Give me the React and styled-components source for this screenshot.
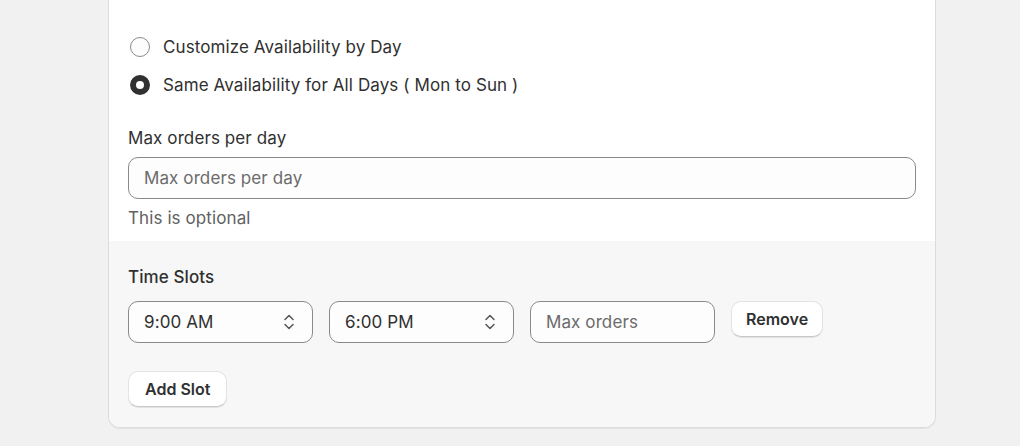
import React from 'react';
import styled, { createGlobalStyle } from 'styled-components';

const GlobalStyle = createGlobalStyle`
  html, body {
    margin: 0;
    padding: 0;
    background: #f1f1f1;
    font-family: Inter, "Noto Sans", sans-serif;
    color: #303030;
    overflow: hidden;
  }
`;

const Page = styled.div`
  width: 1020px;
  height: 446px;
  overflow: hidden;
`;

const Card = styled.div`
  width: 828px;
  box-sizing: border-box;
  margin: -14px 0 0 108px;
  background: #ffffff;
  border: 1px solid #dcdcdc;
  border-radius: 12px;
  overflow: hidden;
  box-shadow: 0 1px 0 rgba(0, 0, 0, 0.06);
`;

const Section = styled.div`
  display: flex;
  flex-direction: column;
  padding: ${(p) => p.$pad};
  background: ${(p) => (p.$muted ? '#f7f7f7' : '#ffffff')};
`;

const RadioGroup = styled.div`
  display: flex;
  flex-direction: column;
  gap: 16px;
  margin-bottom: 31px;
`;

const RadioRow = styled.label`
  display: flex;
  align-items: center;
  gap: 13px;
  font-size: 17px;
  line-height: 22px;
  letter-spacing: 0.1px;
  padding-left: 2px;
`;

const RadioDot = styled.span`
  width: 20px;
  height: 20px;
  box-sizing: border-box;
  border-radius: 50%;
  flex-shrink: 0;
  background: #fdfdfd;
  border: ${(p) => (p.$checked ? '6px solid #303030' : '1px solid #8a8a8a')};
`;

const FieldLabel = styled.div`
  font-size: 17px;
  line-height: 22px;
  letter-spacing: 0.1px;
  margin-bottom: ${(p) => p.$gap || '8px'};
  font-weight: ${(p) => (p.$strong ? 500 : 400)};
`;

const TextBox = styled.div`
  box-sizing: border-box;
  height: 42px;
  width: ${(p) => p.$width || '100%'};
  display: flex;
  align-items: center;
  justify-content: space-between;
  padding: 0 16px 0 15px;
  border: 1px solid #8a8a8a;
  border-radius: 10px;
  background: #fdfdfd;
  font-size: 17px;
  letter-spacing: 0.1px;
  color: ${(p) => (p.$placeholder ? '#6b6b6b' : '#303030')};
  flex-shrink: 0;
`;

const HelpText = styled.div`
  font-size: 17px;
  line-height: 22px;
  letter-spacing: 0.1px;
  color: #616161;
  margin-top: 8px;
`;

const SlotRow = styled.div`
  display: flex;
  align-items: flex-start;
  gap: 16px;
  margin-bottom: 28px;
`;

const Button = styled.button`
  box-sizing: border-box;
  height: 36px;
  padding: 0 ${(p) => p.$padX || '15px'};
  border: 1px solid #e3e3e3;
  border-bottom-color: #c8c8c8;
  border-radius: 10px;
  background: #ffffff;
  font-family: inherit;
  font-size: 16px;
  font-weight: 600;
  color: #303030;
  box-shadow: 0 1px 0 rgba(0, 0, 0, 0.08);
  align-self: ${(p) => p.$self || 'auto'};
`;

function Chevrons() {
  return (
    <svg width="14" height="18" viewBox="0 0 14 18" fill="none" stroke="#555555" strokeWidth="1.5" strokeLinecap="round" strokeLinejoin="round">
      <path d="M3 6.5 L7 2.5 L11 6.5" />
      <path d="M3 11.5 L7 15.5 L11 11.5" />
    </svg>
  );
}

export default function App() {
  return (
    <Page>
      <GlobalStyle />
      <Card>
        <Section $pad="49px 19px 12px 19px">
          <RadioGroup>
            <RadioRow>
              <RadioDot />
              Customize Availability by Day
            </RadioRow>
            <RadioRow>
              <RadioDot $checked />
              Same Availability for All Days ( Mon to Sun )
            </RadioRow>
          </RadioGroup>
          <FieldLabel>Max orders per day</FieldLabel>
          <TextBox $placeholder>Max orders per day</TextBox>
          <HelpText>This is optional</HelpText>
        </Section>
        <Section $muted $pad="25px 19px 20px 19px">
          <FieldLabel $strong $gap="13px">Time Slots</FieldLabel>
          <SlotRow>
            <TextBox $width="185px">
              9:00 AM
              <Chevrons />
            </TextBox>
            <TextBox $width="185px">
              6:00 PM
              <Chevrons />
            </TextBox>
            <TextBox $width="185px" $placeholder>Max orders</TextBox>
            <Button $padX="14px">Remove</Button>
          </SlotRow>
          <Button $self="flex-start" $padX="16px">Add Slot</Button>
        </Section>
      </Card>
    </Page>
  );
}
